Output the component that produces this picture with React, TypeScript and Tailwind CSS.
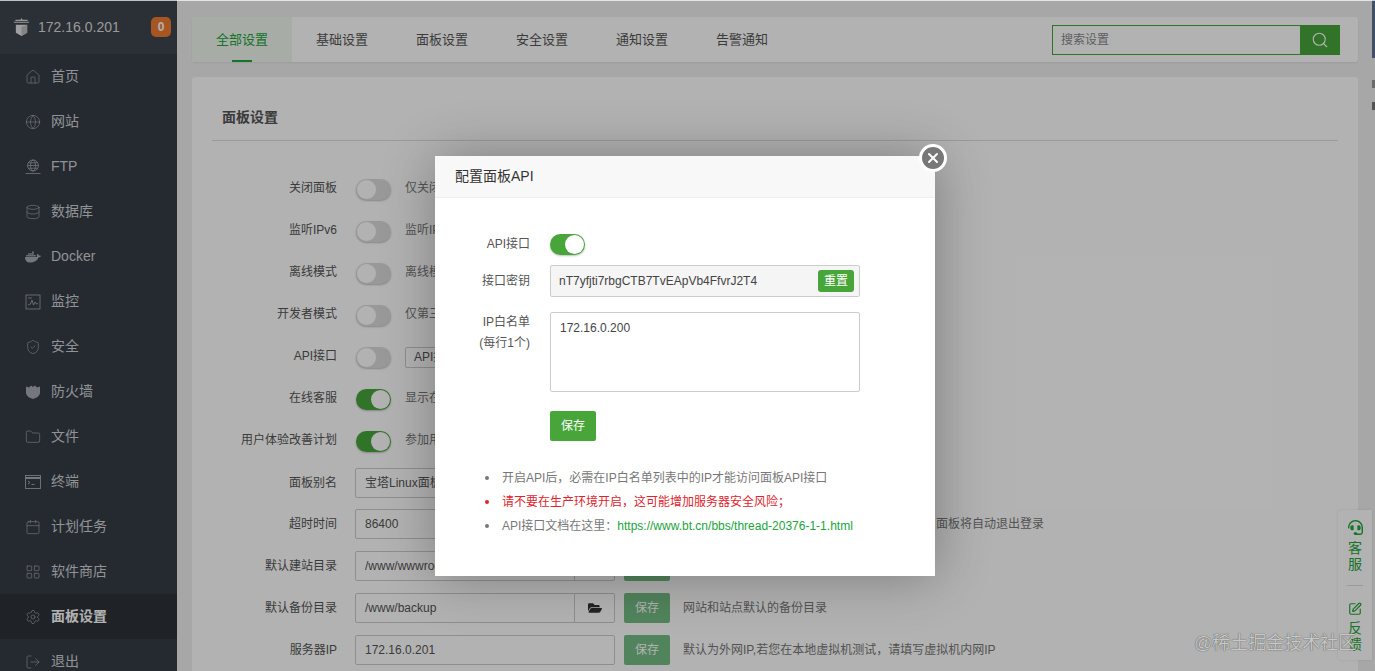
import React from "react";
import {
  Calendar,
  Database,
  Folder,
  Globe,
  House,
  LayoutGrid,
  LogOut,
  Search,
  Settings,
  ShieldCheck,
  SquarePen,
  X,
} from "lucide-react";
import { FaDocker, FaFolderOpen, FaHeadset } from "react-icons/fa";

const font = "font-['Liberation_Sans','Noto_Sans_CJK_SC',sans-serif]";

function FtpIcon() {
  return (
    <svg viewBox="0 0 16 16" className="w-4 h-4" fill="none" stroke="currentColor" strokeWidth="0.8">
      <circle cx="8" cy="6.5" r="5.5" />
      <ellipse cx="8" cy="6.5" rx="2.5" ry="5.5" />
      <path d="M2.5 6.5h11M3.3 3.8h9.4M3.3 9.2h9.4M0.5 14.5h15" />
    </svg>
  );
}

function MonitorIcon() {
  return (
    <svg viewBox="0 0 16 16" className="w-4 h-4" fill="none" stroke="currentColor" strokeWidth="0.8">
      <rect x="1" y="1" width="14" height="14" />
      <path d="M3 11l2.5-1 1.5-4 1.5 5 1.5-3 1.5 2 1.500-.5M3 4h4" />
    </svg>
  );
}

function FirewallIcon() {
  return (
    <svg viewBox="0 0 16 16" className="w-4 h-4" fill="currentColor">
      <path d="M1 2.500l3 1 2-2 2 1.500 2-1.500 2 2 3-1v6c0 3.500-3.500 5.500-7 6.500-3.500-1-7-3-7-6.500z" />
    </svg>
  );
}

function TerminalIcon() {
  return (
    <svg viewBox="0 0 16 16" className="w-4 h-4" fill="none" stroke="currentColor" strokeWidth="0.9">
      <rect x="0.500" y="1.500" width="15" height="13" />
      <path d="M0.500 4h15" strokeWidth="2" />
      <path d="M3 7l2 1.500-2 1.500M6.500 10.500h3" />
    </svg>
  );
}

function LogoIcon() {
  return (
    <svg viewBox="0 0 18 20" className="w-[17px] h-[19px]">
      <path d="M1 4.500h16M2.500 2.500h13" stroke="#d8d8d8" strokeWidth="1.200" />
      <path d="M9 0l1.500 2.500h-3z" fill="#d8d8d8" />
      <path d="M3 7h12v8.500l-6 3.500-6-3.500z" fill="#e6e6e6" />
      <path d="M9 9.500l6-2.500v8.500l-6 3.500z" fill="#bdbdbd" />
    </svg>
  );
}

const menu: { label: string; icon: React.ReactNode; active?: boolean }[] = [
  { label: "首页", icon: <House size={16} strokeWidth={1} /> },
  { label: "网站", icon: <Globe size={16} strokeWidth={1} /> },
  { label: "FTP", icon: <FtpIcon /> },
  { label: "数据库", icon: <Database size={16} strokeWidth={1} /> },
  { label: "Docker", icon: <FaDocker size={16} /> },
  { label: "监控", icon: <MonitorIcon /> },
  { label: "安全", icon: <ShieldCheck size={16} strokeWidth={1} /> },
  { label: "防火墙", icon: <FirewallIcon /> },
  { label: "文件", icon: <Folder size={16} strokeWidth={1} /> },
  { label: "终端", icon: <TerminalIcon /> },
  { label: "计划任务", icon: <Calendar size={16} strokeWidth={1} /> },
  { label: "软件商店", icon: <LayoutGrid size={16} strokeWidth={1} /> },
  { label: "面板设置", icon: <Settings size={16} strokeWidth={1} />, active: true },
  { label: "退出", icon: <LogOut size={16} strokeWidth={1} /> },
];

const tabs = ["全部设置", "基础设置", "面板设置", "安全设置", "通知设置", "告警通知"];

function Toggle({ on }: { on?: boolean }) {
  return (
    <div
      className={`w-[35px] h-[21px] rounded-full flex shrink-0 p-px shadow-[0_1px_2px_rgba(0,0,0,0.25)] ${
        on ? "bg-[#47a53a] justify-end" : "bg-[#dcdcdc] justify-start"
      }`}
    >
      <div className="w-[19px] h-[19px] rounded-full bg-white" />
    </div>
  );
}

function ToggleRow({ label, on, children }: { label: string; on?: boolean; children: React.ReactNode }) {
  return (
    <div className="flex items-center h-[42px]">
      <div className="w-[125px] pb-[2px] text-right text-[12px] text-[#555] shrink-0">{label}</div>
      <div className="ml-[19px] flex items-center">
        <Toggle on={on} />
        {children}
      </div>
    </div>
  );
}

function Help({ children }: { children: React.ReactNode }) {
  return <span className="ml-[14px] pb-[2px] text-[12px] text-[#777] whitespace-nowrap">{children}</span>;
}

function TextRow({
  label,
  value,
  folder,
  help,
  helpClass = "ml-[13px]",
  rowClass = "h-[42px]",
}: {
  label: string;
  value: string;
  folder?: boolean;
  help?: string;
  helpClass?: string;
  rowClass?: string;
}) {
  return (
    <div className={`flex items-center ${rowClass}`}>
      <div className="w-[125px] text-right text-[12px] text-[#555] shrink-0">{label}</div>
      <div className="ml-[18px] flex items-center">
        <div className="flex justify-between w-[260px] h-[30px] border border-[#ccc] rounded-[2px] items-center text-[12px] text-[#555] bg-white">
          <span className="pl-[9px]">{value}</span>
          {folder && (
            <span className="w-[40px] h-full border-l border-[#ccc] flex items-center justify-center text-[#333]">
              <FaFolderOpen size={14} />
            </span>
          )}
        </div>
        <button className="ml-[9px] w-[46px] h-[30px] rounded-[2px] bg-[#74bd84] text-white text-[12px]">保存</button>
        {help && <span className={`${helpClass} text-[12px] text-[#777] whitespace-nowrap`}>{help}</span>}
      </div>
    </div>
  );
}

function Note({ dot, children }: { dot: string; children: React.ReactNode }) {
  return (
    <li className="flex items-center h-[24px]">
      <span className={`w-[4px] h-[4px] rounded-full shrink-0 ${dot}`} />
      <span className="ml-[13px]">{children}</span>
    </li>
  );
}

function ApiModal() {
  return (
    <div className="absolute left-[435px] top-[156px] w-[500px] h-[420px] bg-white shadow-[1px_1px_50px_rgba(0,0,0,0.3)]">
      <div className="h-[42px] bg-[#f8f8f8] border-b border-[#eee] flex items-center pl-5 text-[14px] text-[#333]">
        配置面板API
      </div>
      <button className="absolute -right-[12px] -top-[12px] w-[28px] h-[28px] rounded-full bg-[#777] border-[3px] border-white flex items-center justify-center text-white">
        <X size={16} strokeWidth={3} />
      </button>
      <div className="pt-[26px] text-[12px] text-[#555]">
        <div className="flex items-center h-[40px]">
          <div className="w-[95px] text-right">API接口</div>
          <div className="ml-5">
            <Toggle on />
          </div>
        </div>
        <div className="flex items-center mt-px">
          <div className="w-[95px] text-right">接口密钥</div>
          <div className="ml-[20px] w-[310px] h-[32px] border border-[#ccc] rounded-[2px] bg-[#f5f5f5] flex items-center justify-between pl-[8px] pr-[5px] text-[#444]">
            <span>nT7yfjti7rbgCTB7TvEApVb4FfvrJ2T4</span>
            <span className="w-[36px] h-[22px] rounded-[3px] bg-[#47a53a] text-white flex items-center justify-center">
              重置
            </span>
          </div>
        </div>
        <div className="flex mt-[15px]">
          <div className="w-[95px] text-right leading-[21px]">
            IP白名单
            <br />
            (每行1个)
          </div>
          <div className="ml-[20px] w-[310px] h-[80px] border border-[#ccc] rounded-[2px] px-[9px] py-[6px] text-[#444]">
            172.16.0.200
          </div>
        </div>
        <button className="block ml-[115px] mt-[19px] w-[46px] h-[30px] rounded-[2px] bg-[#47a53a] text-white">
          保存
        </button>
        <ul className="mt-[25px] ml-[50px] text-[#777]">
          <Note dot="bg-[#777]">开启API后，必需在IP白名单列表中的IP才能访问面板API接口</Note>
          <Note dot="bg-[#e0242c]">
            <span className="text-[#e0242c]">请不要在生产环境开启，这可能增加服务器安全风险；</span>
          </Note>
          <Note dot="bg-[#777]">
            API接口文档在这里：<span className="text-[#20a53a]">https://www.bt.cn/bbs/thread-20376-1-1.html</span>
          </Note>
        </ul>
      </div>
    </div>
  );
}

export default function App() {
  return (
    <div className={`relative h-screen overflow-hidden flex bg-[#f0f0f0] ${font}`}>
      <aside className="w-[177px] shrink-0 bg-[#363c45] text-[14px] text-[#cfd2d6]">
        <div className="h-[54px] bg-[#3e444e] flex items-center pl-[13px] pr-[6px] text-[#dcdcdc]">
          <LogoIcon />
          <span className="ml-2 flex-1">172.16.0.201</span>
          <span className="w-5 h-5 rounded-[5px] bg-[#f07a30] text-white text-[12px] font-bold flex items-center justify-center">
            0
          </span>
        </div>
        {menu.map((m) => (
          <div
            key={m.label}
            className={`h-[45px] flex items-center pl-[25px] ${m.active ? "bg-[#2d3139] text-white font-bold" : ""}`}
          >
            <span className="w-4 h-4 flex items-center justify-center text-[#a7abb0]">{m.icon}</span>
            <span className="ml-[10px]">{m.label}</span>
          </div>
        ))}
      </aside>

      <main className="flex-1 pl-[15px] pr-[14px] pt-[17px] min-w-0">
        <div className="h-[45px] bg-white rounded-[3px] flex items-center shadow-[0_1px_2px_rgba(0,0,0,0.08)]">
          {tabs.map((t, i) => (
            <div
              key={t}
              className={`relative h-full flex items-center px-6 text-[13px] ${
                i === 0 ? "bg-[#f0f7ee] text-[#20a53a]" : "text-[#555]"
              }`}
            >
              {t}
              {i === 0 && <span className="absolute left-[40px] bottom-0 w-[20px] h-[2px] bg-[#20a53a]" />}
            </div>
          ))}
          <div className="ml-auto mr-[18px] flex h-[30px] w-[288px] border border-[#47a53a]">
            <div className="flex-1 flex items-center pl-2 text-[12px] text-[#888]">搜索设置</div>
            <div className="w-[39px] bg-[#47a53a] flex items-center justify-center text-white">
              <Search size={18} strokeWidth={1.500} />
            </div>
          </div>
        </div>

        <div className="mt-[15px] bg-white rounded-[3px] px-5 h-[700px]">
          <div className="h-[64px] border-b border-[#ddd] flex items-end pb-[12px] pl-[10px] text-[14px] font-bold text-[#555]">
            面板设置
          </div>
          <div className="pt-[27px]">
            <ToggleRow label="关闭面板">
              <Help>仅关闭面板</Help>
            </ToggleRow>
            <ToggleRow label="监听IPv6">
              <Help>监听IPv6</Help>
            </ToggleRow>
            <ToggleRow label="离线模式">
              <Help>离线模式</Help>
            </ToggleRow>
            <ToggleRow label="开发者模式">
              <Help>仅第三方</Help>
            </ToggleRow>
            <ToggleRow label="API接口">
              <span className="ml-[14px] h-[21px] px-2 border border-[#ccc] rounded-[2px] text-[12px] text-[#555] flex items-center">
                API接口配置
              </span>
            </ToggleRow>
            <ToggleRow label="在线客服" on>
              <Help>显示在线客服</Help>
            </ToggleRow>
            <ToggleRow label="用户体验改善计划" on>
              <Help>参加用户体验改善计划</Help>
            </ToggleRow>
            <TextRow label="面板别名" value="宝塔Linux面板" rowClass="h-[41px]" />
            <TextRow label="超时时间" value="86400" help="面板将自动退出登录" helpClass="ml-[266px]" />
            <TextRow label="默认建站目录" value="/www/wwwroot" folder />
            <TextRow label="默认备份目录" value="/www/backup" folder help="网站和站点默认的备份目录" />
            <TextRow
              label="服务器IP"
              value="172.16.0.201"
              help="默认为外网IP,若您在本地虚拟机测试，请填写虚拟机内网IP"
            />
          </div>
        </div>
      </main>

      <div className="w-[3px] shrink-0 flex flex-col">
        <div className="h-[58px] bg-[#5d7196]" />
        <div className="h-[22px] bg-[#f0f0f0]" />
        <div className="h-[8px] bg-[#9a9a9a]" />
        <div className="h-[14px] bg-[#f0f0f0]" />
        <div className="h-[8px] bg-[#777]" />
        <div className="flex-1 bg-[#f0f0f0]" />
      </div>

      <div className="absolute right-[3px] top-[510px] w-[34px] h-[150px] bg-white rounded-l-[4px] flex flex-col items-center pt-[10px] text-[#20a53a] text-[14px] leading-[16px] shadow-[0_0_3px_rgba(0,0,0,0.1)]">
        <FaHeadset size={15} />
        <span className="mt-[5px] w-[14px] text-center">客服</span>
        <span className="w-4 h-px bg-[#ddd] mt-[13px] mb-[16px]" />
        <SquarePen size={14} />
        <span className="mt-[4px] w-[14px] text-center">反馈</span>
      </div>

      <div className="absolute inset-0 bg-black/30" />
      <div className="absolute left-0 right-0 top-0 h-px bg-white/70" />
      <ApiModal />
      <div className="absolute left-[1194px] top-[633px] text-[18px] leading-[20px] text-[#c8c8c8] [text-shadow:0_0_1px_#333] whitespace-nowrap">
        @稀土掘金技术社区
      </div>
    </div>
  );
}
